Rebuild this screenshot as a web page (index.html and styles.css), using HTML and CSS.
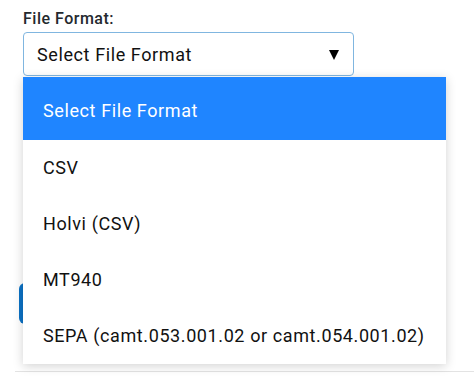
FILE: index.html
```html
<!DOCTYPE html>
<html lang="en">
<head>
<meta charset="utf-8">
<title>File Format</title>
<link rel="stylesheet" href="styles.css">
</head>
<body>
<div class="page">
  <form class="form">
    <div class="field">
      <label class="label" for="fmt">File Format:</label>
      <div class="select" id="fmt">
        <span class="select-value">Select File Format</span>
        <svg class="arrow" width="10" height="10" viewBox="0 0 10 10" aria-hidden="true"><polygon points="0,0 10,0 5,10" fill="#000"/></svg>
      </div>
    </div>
    <div class="actions">
      <button type="button" class="btn" aria-label="Import"></button>
    </div>
  </form>
  <div class="rule"></div>

  <ul class="dropdown" role="listbox">
    <li class="option option-first selected">Select File Format</li>
    <li class="option">CSV</li>
    <li class="option">Holvi (CSV)</li>
    <li class="option">MT940</li>
    <li class="option">SEPA (camt.053.001.02 or camt.054.001.02)</li>
  </ul>
</div>
</body>
</html>
```

FILE: styles.css
```css
html, body {
  margin: 0;
  padding: 0;
  background: #fff;
}
body {
  font-family: Roboto, "Liberation Sans", sans-serif;
  width: 474px;
  height: 383px;
  overflow: hidden;
}
.page {
  position: relative;
  padding: 10px 0 0 15px;
}
.form {
  display: flex;
  flex-direction: column;
}
.field {
  padding-left: 8px;
  display: flex;
  flex-direction: column;
}
.label {
  font-size: 16px;
  line-height: 18px;
  font-weight: 500;
  letter-spacing: 0.5px;
  color: #24292e;
}
.select {
  margin-top: 4px;
  box-sizing: border-box;
  width: 331px;
  height: 44px;
  border: 1px solid #80b6e0;
  border-radius: 4px;
  display: flex;
  align-items: center;
  justify-content: space-between;
  padding: 0 14px 0 13px;
}
.select-value {
  font-size: 18px;
  line-height: 21px;
  letter-spacing: 0.6px;
  color: #111;
}
.arrow {
  display: block;
  margin-top: 1px;
}
.actions {
  margin-top: 207px;
  padding-left: 4px;
}
.btn {
  display: block;
  width: 160px;
  height: 41px;
  border: 0;
  border-radius: 6px;
  background: #0b72c5;
}
.rule {
  margin-top: 47px;
  height: 1px;
  background: #e3e3e3;
}
.dropdown {
  position: absolute;
  top: 77px;
  left: 23px;
  width: 423px;
  margin: 0;
  padding: 0;
  list-style: none;
  background: #fff;
  box-shadow: 0 2px 10px rgba(0, 0, 0, 0.18);
  display: flex;
  flex-direction: column;
}
.option {
  font-size: 18px;
  line-height: 21px;
  letter-spacing: 0.6px;
  color: #111;
  padding: 17px 20px 18px;
}
.option-first {
  padding-top: 23px;
  padding-bottom: 19px;
}
.selected {
  background: #1f85ff;
  color: #fff;
}
```
